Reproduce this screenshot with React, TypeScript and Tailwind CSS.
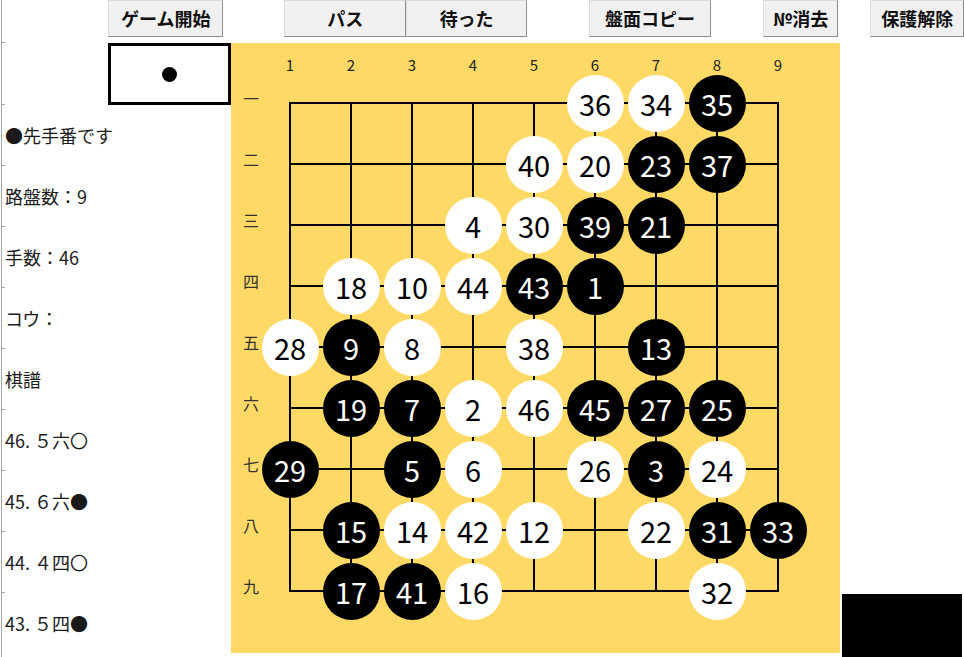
import React from 'react';

const JP = "font-['Noto_Sans_CJK_JP','Noto_Sans',sans-serif]";

// [列, 行, 手数]
const stones: [number, number, number][] = [
  [6, 1, 36], [7, 1, 34], [8, 1, 35],
  [5, 2, 40], [6, 2, 20], [7, 2, 23], [8, 2, 37],
  [4, 3, 4], [5, 3, 30], [6, 3, 39], [7, 3, 21],
  [2, 4, 18], [3, 4, 10], [4, 4, 44], [5, 4, 43], [6, 4, 1],
  [1, 5, 28], [2, 5, 9], [3, 5, 8], [5, 5, 38], [7, 5, 13],
  [2, 6, 19], [3, 6, 7], [4, 6, 2], [5, 6, 46], [6, 6, 45], [7, 6, 27], [8, 6, 25],
  [1, 7, 29], [3, 7, 5], [4, 7, 6], [6, 7, 26], [7, 7, 3], [8, 7, 24],
  [2, 8, 15], [3, 8, 14], [4, 8, 42], [5, 8, 12], [7, 8, 22], [8, 8, 31], [9, 8, 33],
  [2, 9, 17], [3, 9, 41], [4, 9, 16], [8, 9, 32],
];

const rowLabels = ['一', '二', '三', '四', '五', '六', '七', '八', '九'];
const infoRows = ['●先手番です', '路盤数：9', '手数：46', 'コウ：', '棋譜', '46. ５六〇', '45. ６六●', '44. ４四〇', '43. ５四●'];

const GX = (c: number) => 59 + 61 * (c - 1);
const GY = (r: number) => 60 + 61 * (r - 1);

function Btn({ label, className }: { label: string; className: string }) {
  return (
    <button className={`h-[37px] bg-[#f0f0f0] border border-[#dcdcdc] border-r-[#8e8e8e] border-b-[#8e8e8e] text-[18px] font-bold text-[#111] ${className}`}>
      {label}
    </button>
  );
}

function Tick() {
  return <div className="h-px w-[3px] bg-[#a6a6a6]"></div>;
}

export default function App() {
  return (
    <div className={`w-[964px] h-[657px] bg-white overflow-hidden ${JP}`}>
      <div className="ml-[1px] border-l border-[#a6a6a6] h-full">
        <div className="flex h-[42px] items-start">
          <Btn label="ゲーム開始" className="ml-[106px] w-[116px]" />
          <Btn label="パス" className="ml-[61px] w-[122px]" />
          <Btn label="待った" className="w-[122px]" />
          <Btn label="盤面コピー" className="ml-[62px] w-[122px]" />
          <Btn label="№消去" className="ml-[52px] w-[76px]" />
          <Btn label="保護解除" className="ml-[32px] w-[94px]" />
        </div>

        <div className="flex">
          <div className="w-[229px] flex flex-col">
            <Tick />
            <div className="h-[61px] flex">
              <div className="ml-[106px] w-[123px] h-[62px] border-[3px] border-black bg-white flex items-center justify-center">
                <div className="w-[15px] h-[15px] rounded-full bg-black"></div>
              </div>
            </div>
            {infoRows.map((t) => (
              <div key={t} className="h-[61px] flex flex-col">
                <Tick />
                <div className="flex-1 flex items-center pl-[3px] text-[18px] text-[#1a1a1a] whitespace-pre">{t}</div>
              </div>
            ))}
          </div>

          <div className="relative w-[609px] h-[610px] mt-px bg-[#FFD966] shrink-0">
            <svg className="absolute inset-0" width="609" height="610">
              {Array.from({ length: 9 }).map((_, i) => (
                <g key={i}>
                  <line x1={GX(1) - 1} y1={GY(i + 1)} x2={GX(9) + 1} y2={GY(i + 1)} stroke="#000" strokeWidth="2" />
                  <line x1={GX(i + 1)} y1={GY(1) - 1} x2={GX(i + 1)} y2={GY(9) + 1} stroke="#000" strokeWidth="2" />
                </g>
              ))}
            </svg>
            {Array.from({ length: 9 }).map((_, i) => (
              <div key={'c' + i} className="absolute w-[20px] text-center text-[15px] text-[#222]" style={{ left: GX(i + 1) - 10, top: 11 }}>
                {i + 1}
              </div>
            ))}
            {rowLabels.map((l, i) => (
              <div key={l} className="absolute w-[24px] text-center text-[16px] text-[#333]" style={{ left: 8, top: GY(i + 1) - 17 }}>
                {l}
              </div>
            ))}
            {stones.map(([c, r, n]) => {
              const black = n % 2 === 1;
              return (
                <div
                  key={n}
                  className={`absolute w-[57px] h-[57px] rounded-full flex items-center justify-center text-[29px] leading-none ${black ? 'bg-black text-white' : 'bg-white text-black'}`}
                  style={{ left: GX(c) - 28.5, top: GY(r) - 28.5 }}
                >
                  {n}
                </div>
              );
            })}
          </div>

          <div className="w-[124px] flex flex-col">
            <div className="ml-[2px] mt-[552px] w-[120px] h-[63px] bg-black"></div>
          </div>
        </div>
      </div>
    </div>
  );
}
